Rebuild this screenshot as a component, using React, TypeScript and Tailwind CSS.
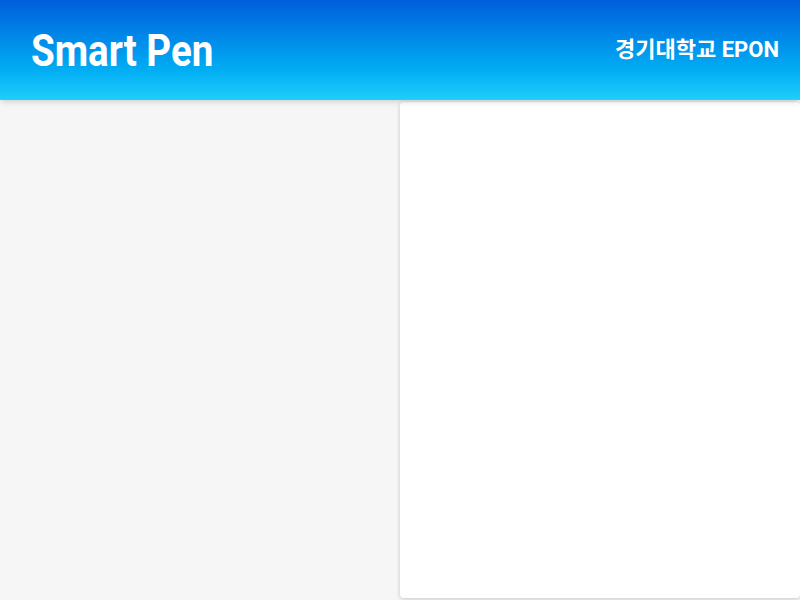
export default function App() {
  return (
    <div className="w-[800px] h-[600px] flex flex-col bg-[#f6f6f6] overflow-hidden" style={{ fontFamily: 'Roboto, "Noto Sans CJK KR", sans-serif' }}>
      <header className="h-[100px] shrink-0 flex items-center justify-between pl-[31px] pr-[21px] bg-gradient-to-b from-[#005ddb] to-[#1fcefc] shadow-md z-10">
        <h1 className="text-white font-bold text-[45px] leading-none origin-left scale-x-[0.856] whitespace-nowrap">Smart Pen</h1>
        <div className="text-white font-bold text-[22px] leading-none">경기대학교 EPON</div>
      </header>
      <main className="flex-1 grid grid-cols-2">
        <div className="bg-[#f6f6f6]" />
        <div className="bg-white rounded-[4px] shadow-[0_1px_4px_rgba(0,0,0,0.2)] my-[2px]" />
      </main>
    </div>
  );
}
